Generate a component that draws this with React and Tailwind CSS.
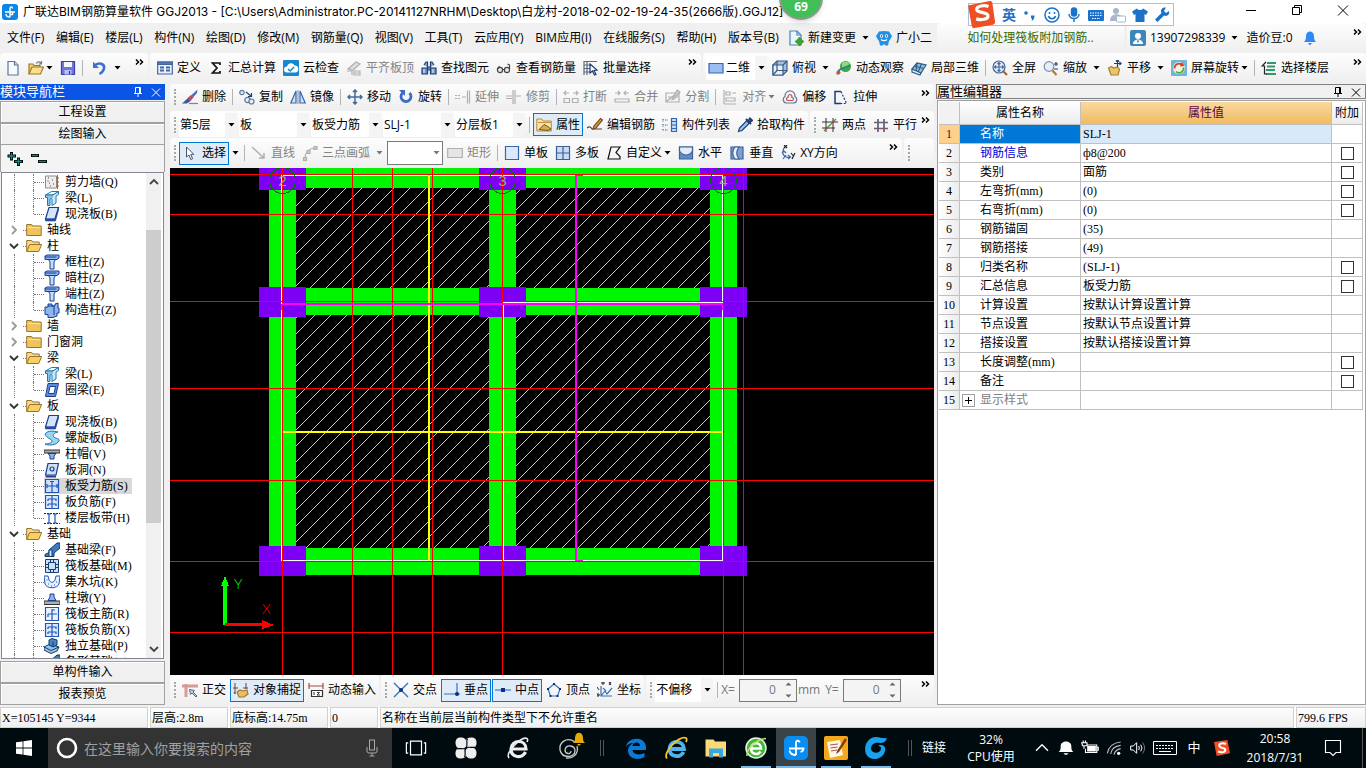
import React from "react";

const SONG = "font-[family-name:'Liberation_Serif','Noto_Sans_CJK_SC',serif]";
const UI = "font-[family-name:'Open_Sans','Noto_Sans_CJK_SC',sans-serif]";

/* ---------- icons ---------- */

const B = "#3566b0";
const N = "#1f3f73";
const G = "#b0b0b0";

const S = (props) => (
  <svg viewBox="0 0 16 16" className="size-4 shrink-0" fill="none" stroke={B} strokeWidth="1.2" aria-hidden="true" {...props} />
);

const icons = {
  newDoc: <S stroke="#5c7699"><path d="M3 1.5h6.5l3.500 3.500v10H3z" fill="#f7faff" /><path d="M9.500 1.500v3.500h3.500" fill="#cfdcf0" /></S>,
  open: <S stroke="#9a7a28"><path d="M1 14V4h4l1 1.500h6V8" fill="#f3d27a" /><path d="M1 14l3-7h11.500l-3 7z" fill="#fbe08c" /><path d="M8 3.500c2-2.500 4-2 5 0M13.500 1v3h-3" stroke="#6a7d98" /></S>,
  save: <S stroke="#3b3fa8"><path d="M1.500 1.500h13v13h-13z" fill="#6f78d8" /><path d="M4 2h8v5H4z" fill="#f4f6ff" stroke="none" /><path d="M4.500 10h7v4.500h-7z" fill="#b9c2ee" stroke="none" /><path d="M9.500 11v3" stroke="#2a2e80" /></S>,
  undo: <S stroke="#3f6fce" strokeWidth="2.600"><path d="M3 5c5-3 10-1 9 3.500-.4 2-2 4-4.500 5.500" /><path d="M1 1.500v6.500h6z" fill="#3f6fce" stroke="none" /></S>,
  define: <S stroke="#41679f"><path d="M.7 2h14.600v12H.7z" fill="#eaf1fb" /><path d="M.7 2h14.600v2.500H.7z" fill="#4c7ac0" /><path d="M3 7.500h4M3 10.500h4M9 7.500h4M9 10.500h4" strokeWidth="1.800" /></S>,
  sigma: <S stroke="#111" strokeWidth="1.700"><path d="M12 5V3H4.500L9 8l-4.500 5H12v-2" /></S>,
  cloud: <S stroke="none"><rect width="16" height="16" rx="1" fill="#1487cf" /><path d="M4 12.500a3 3 0 010-6 4 4 0 017.500-1 3.500 3.500 0 01.500 7z" fill="#fff" /><path d="M5 9l2.200 2L11 7" stroke="#1487cf" strokeWidth="1.500" /></S>,
  flat: <S stroke={G}><path d="M2 9l8-7 4 2-7 6z" fill="#ddd" /><path d="M1 11h5v4M8 11h6v4H8zM8 13h6" /></S>,
  binocular: <S stroke={N}><path d="M3 5l2-3h1.500v5M13 5l-2-3H9.500v5" fill="#8aa6d0" /><path d="M1 8h5.500v6H1zM9.500 8H15v6H9.500zM6.500 7h3v3h-3z" fill="#6f92c4" /><path d="M3 9v4M12 9v4" stroke="#dfeafa" /></S>,
  glasses: <S stroke="#444"><circle cx="4" cy="10" r="2.600" fill="#dfe8f0" /><circle cx="11" cy="10" r="2.600" fill="#dfe8f0" /><path d="M6.500 9.500h2M13.500 9V5l-2-1M1.500 9l2-3" /></S>,
  batch: <S stroke="#5a6a80"><path d="M1 1.500h13M1 5h6M1 8.500h6M1 12h6M4 1v14M1 1v14" /><path d="M7 4l7 6-3 .4 2 4-1.500.6-2-4L7 13z" fill="#f6f9ff" stroke={N} /></S>,
  rect2d: <S stroke={B}><path d="M1 3.500h14v9.500H1z" fill="#9dbdf0" /></S>,
  cube: <S stroke="#3b5b82"><path d="M1 5l4-4h10v10l-4 4H1z" fill="#a5c2e6" /><path d="M1 5h10v10H1z" fill="#e8f1fb" /><path d="M11 5l4-4M5 1v9.500M5 10.500L1 15M5 10.500h10" /></S>,
  orbit: <S stroke="none"><circle cx="9.500" cy="6.500" r="5.500" fill="#3aa84a" /><path d="M6 3c3-2.500 7-1 8 1-2 3-4 4-8 4z" fill="#8fdc7c" /><path d="M1.500 14.500C1 9 6 9 14 5" stroke="#2f7a8c" strokeWidth="1.800" /><circle cx="2.500" cy="12.500" r="2" fill="#d0503c" /></S>,
  local3d: <S stroke="#2c5c88"><path d="M1 9l5-6 9 2-5 8z" fill="#93bedd" /><path d="M1 9v3l8 3 1-2M6 3l-1 8M10.500 4L7 12M3.500 6l9 2.500" /></S>,
  full: <S stroke="#47659a"><circle cx="7" cy="7" r="6" fill="#e4eefb" /><path d="M7 2.500v9M2.500 7h9M5.500 4L7 2.500 8.500 4M5.500 10L7 11.500 8.500 10M4 5.500L2.500 7 4 8.500M10 5.500L11.500 7 10 8.500" /><path d="M11.500 11.500l3.500 3.500" stroke="#a5672c" strokeWidth="2.200" /></S>,
  zoom: <S stroke="#7c90ab"><circle cx="6" cy="6.500" r="4.800" fill="#e4eefb" /><path d="M9.500 10.500l4 4.500" stroke="#b5792c" strokeWidth="2.200" /><path d="M11 4h4M13 2v4M11 9h4" stroke={N} /></S>,
  pan: <S stroke="#a8802f"><path d="M1.500 8l3-1.500 2 1.500 4-1 2 2.500-1.500 5.500H4z" fill="#eac56a" /><path d="M10.500 0v7M7 3.500h7M9 1.500L10.500 0 12 1.500M12.500 2L14 3.500 12.500 5" stroke={N} /></S>,
  screenRot: <S stroke="none"><rect width="16" height="16" rx="1" fill="#6fb7d9" /><circle cx="8" cy="8" r="6" fill="#eef5dc" /><path d="M3.500 8.500a4.500 4.500 0 017-4" stroke="#d83a2c" strokeWidth="1.700" /><path d="M12.500 7.500a4.500 4.500 0 01-7.500 4" stroke="#55a83c" strokeWidth="1.700" /><path d="M11 2l2.500 4-4.500.5z" fill="#d83a2c" /></S>,
  floors: <S stroke="#2f9a6a" strokeWidth="1.800"><path d="M6 3h9M6 6.500h8M5 10h9M5 14h10" /><path d="M5 2L1 6h2.500v8H6" stroke="#222" strokeWidth="1.200" /></S>,
  brush: <S stroke="none"><path d="M15.500.5L9 6.500l2 2L15 4z" fill="#4a70b4" /><path d="M9 6l2.500 2.500-3 3.500-3-3z" fill="#c04a5e" /><path d="M6 9l2.500 3-3.500 2.500H0z" fill="#345ca4" /><path d="M7 14.500h9" stroke="#6a86b8" /></S>,
  copy: <S stroke="#5d7899"><circle cx="3" cy="3.500" r="2.200" fill="#e6eef7" /><circle cx="8.500" cy="11" r="2.700" fill="#e6eef7" /><circle cx="12.500" cy="12.500" r="2.500" fill="#e6eef7" /><path d="M7 3l5 4M12.500 4v3.500H9" stroke={N} /></S>,
  mirror: <S stroke={B}><path d="M6 2v12H.8zM10 2v12h5.200z" fill="#d4e2f5" /><path d="M8 1v14" stroke="#8a9ab0" /></S>,
  move: <S stroke="#466a9e" strokeWidth="1.500"><path d="M8 1v14M1 8h14M6 3l2-2 2 2M6 13l2 2 2-2M3 6L1 8l2 2M13 6l2 2-2 2" /></S>,
  rotate: <S stroke="#3c6cc4" strokeWidth="2.800"><path d="M4.500 4a5 5 0 107 0" /><path d="M1 1h6v6z" fill="#3c6cc4" stroke="none" /></S>,
  extend: <S stroke={G}><path d="M0 6.500h6M0 9.500h6" strokeDasharray="2 1" /><path d="M7 8h4M12.500 1.500v13M14.500 1.500v13" /></S>,
  trim: <S stroke={G}><path d="M0 7h6M0 9.500h6M7 1v14M9 1v14M10 7h5" /></S>,
  brk: <S stroke={G}><path d="M1 4h5M3 2L1 4l2 2M10 4h5M13 2l2 2-2 2M1 9.500h5.500v4H1zM9.500 9.500H15v4H9.500z" /></S>,
  merge: <S stroke={G}><path d="M1 4h5M4 2l2 2-2 2M10 4h5M12 2l-2 2 2 2M1 10h14v3H1z" /></S>,
  split: <S stroke={G}><path d="M1 4h13v9H1zM1 13L14 2M3 8h10" /><path d="M12 1l3 2-6 7-2 .5z" fill="#ccc" /></S>,
  align: <S stroke={G}><path d="M2 1v14M2 15h12M4 3h4v3H4zM4 9h9v3H4zM10 4h4" /></S>,
  offset: <S stroke="#5c7699"><path d="M4 14a3.500 3.500 0 01-1-6.500C3 0 13 0 13 7.500a3.500 3.500 0 01-1 6.500z" fill="#eef3f8" /><path d="M6 11.500a1.500 1.500 0 010-3c0-4 4-4 4 0a1.500 1.500 0 010 3z" stroke="#cc4a42" /></S>,
  stretch: <S stroke={N}><path d="M8 2.500H2v12h6" strokeWidth="1.500" /><path d="M8 2.500l5.500 12H8" strokeDasharray="2 1.500" /></S>,
  props: <S stroke="#b98a3a" strokeWidth="1"><path d="M.8 2h5l1.500 2h8v10H.8z" fill="#fbe2aa" /><path d="M2 5.500h13" stroke="#c98f38" /><path d="M3 12.500l5-5 3 1.500 4 3-3 1.500z" fill="#d9ac50" stroke="#6a5424" /></S>,
  editBar: <S stroke="#444"><path d="M0 11c2-2 4-1 5 1h10" /><path d="M13.500 1.500l2 1.500-6.500 8-3 1 1-3z" fill="#dfa254" stroke="#7a4a20" /></S>,
  list: <S stroke={B}><path d="M1 2v3M1 7v3M1 12v2M3 3h3M3 8h3M3 13h3" strokeDasharray="1.500 1" /><path d="M9.500 1.500h5v13h-5zM9.500 4.500h5M9.500 8h5M9.500 11.500h5" fill="#cadcf2" /></S>,
  picker: <S stroke={N}><path d="M10 3.500L2.500 11l-1 3.500 3.500-1L12.500 6z" fill="#9cc4ee" /><path d="M9 2l5 5M11 4.500l2-3 2 2-3 2z" strokeWidth="2" /></S>,
  twoPt: <S stroke="#333"><path d="M4 1v14M11 1v14M0 5h16M0 11h13" strokeWidth="1" /><path d="M2 14L14 2" stroke="#3f9a3f" /><circle cx="4.500" cy="11" r="1.300" fill="#c33" stroke="none" /><circle cx="11" cy="5" r="1.300" fill="#c33" stroke="none" /></S>,
  parallel: <S stroke="#3a5078"><path d="M5 2v13M11 2v13" strokeWidth="1.500" /><path d="M1 5.500h14M1 11.500h14" stroke="#7a5a6c" strokeWidth="1.500" /></S>,
  cursor: <S stroke="#44556b" strokeWidth="1"><path d="M4.500 2v10l2.500-2 1.800 4.500 1.800-.8L8.800 9.500l3-.2z" fill="#fff" /></S>,
  line: <S stroke={G}><path d="M1 2l12 11M13 8v5H8" strokeWidth="1.500" /></S>,
  arc: <S stroke={G}><path d="M3 14C3 7 7 3 14 3" /><path d="M1.500 12.500h3v3h-3zM5 5.500h3v3H5zM12 1.500h3v3h-3z" fill="#ccc" /></S>,
  rectG: <S stroke={G}><path d="M.7 3.500h14.600v9H.7z" fill="#e6e6e6" /></S>,
  single: <S stroke={B}><path d="M1.500 1.500h13v13h-13z" fill="#dce9fb" /></S>,
  multi: <S stroke="#3e5f94"><path d="M1.500 1.500h13v13h-13zM8 1.500v13M1.500 8h13" fill="#c9dcf5" /></S>,
  custom: <S stroke="#111"><path d="M5 2h9l-4 5.500 4 4V14H2z" /></S>,
  horiz: <S stroke="#3e5f94"><path d="M1.500 2h13v12h-13z" fill="#5f8cc8" /><path d="M1.500 2v4c2 3 4 4 6.500 4s4.500-1 6.500-4V2z" fill="#e0ecfa" /></S>,
  vert: <S stroke="#3e5f94"><path d="M2 2h12v12H2z" fill="#7aa0d4" /><path d="M6 2h4c-3 4-3 8 0 12H6c-3-4-3-8 0-12z" fill="#eef4fc" /></S>,
  xy: <S stroke={B}><path d="M4 3c-4 8 3 10 6 9M2 8l2-2 2 2M8 10l2.500 2-2.500 2M3 14l3-4" /><path d="M4 0l3 3M7 0L4 3M11 8l2 2.500M15 8l-3 6" stroke="#222" /></S>,
  ortho: <S stroke="#d99a98" strokeWidth="3"><path d="M4 2v13M0 4h16" /><path d="M7.500 7.500l1 5 1.500-1.500 4 4 1-1-4-4 1.500-1.500z" stroke="#5a6b82" fill="#c8d2de" strokeWidth="1" /></S>,
  snap: <S stroke="#7a3b3b"><path d="M2 1v11M13 1v6M0 6h5M2 12l-1-2M10 6h5" strokeWidth="1" /><path d="M4 10l3-2 3 1 4-1 1 4-4 3H6z" fill="#e7be62" stroke="#a07a30" /></S>,
  dyn: <S stroke="#9b4a4a"><path d="M1 1v6M15 1v6M1 4h14" /><path d="M3.500 8.500h11v6h-11z" fill="#fff" stroke="#333" /><path d="M6 10v3M9 10.500h2.500L9 13h3" stroke="#333" strokeWidth="1" /></S>,
  cross: <S stroke="#3572bd" strokeWidth="1.400"><path d="M1 1l14 14M15 1L1 15" /><circle cx="8" cy="8" r="2" fill="#0b2f82" stroke="none" /></S>,
  perp: <S stroke="#3572bd"><path d="M0 12h16M13 1v11" /><circle cx="13" cy="12" r="2" fill="#0b2f82" stroke="none" /></S>,
  mid: <S stroke="#6fa0dc" strokeWidth="1.800"><path d="M0 8h16" /><path d="M6 6h4v4H6z" fill="#0b2f82" stroke="none" /></S>,
  vertex: <S stroke="#3572bd"><path d="M8 2l6 5-2.500 7h-7L2 7z" /><path d="M7 1h2v2H7zM1 6h2v2H1zM13 6h2v2h-2zM3.500 13h2v2h-2zM10.500 13h2v2h-2z" fill="#0b2f82" stroke="none" /></S>,
  coord: <S stroke="#3572bd"><path d="M4 4v10h11M4 14l4-5 2 3 5-6M6 6l3 3" /><path d="M5 0h2v2H5zM12 0l2 3M14 0l-2 3M0 12h2v2H0zM0 5l2 3" stroke="#222" strokeWidth="1" /></S>,
  change: <S stroke="#4b83b2"><path d="M2 1h7l4 4v10H2z" fill="#eaf4fc" /><path d="M9 1v4h4" /><path d="M11.500 7l2 2.500L16 11.500l-2.500 2-2 2.500-2-2.500-2.500-2 2.500-2z" fill="#3ca52c" stroke="#2c7a20" strokeWidth=".6" /></S>,
  robot: <S stroke="none"><path d="M3 1.500L8 1l5 .5L16 6l-1.500 3L13 11l-1 4.500H9.500L8 14l-1.500 1.500H4L3 11 1.500 9 0 6z" fill="#1f8fe8" /><circle cx="5.500" cy="6" r="1.700" fill="#fff" /><circle cx="10.500" cy="6" r="1.700" fill="#fff" /><circle cx="5.500" cy="6" r=".8" fill="#124" /><circle cx="10.500" cy="6" r=".8" fill="#124" /><path d="M5 9.500c1.500 1.500 4.500 1.500 6 0" stroke="#fff" /></S>,
  user: <S stroke="none"><rect width="16" height="16" rx="2" fill="#3d86b8" /><circle cx="8" cy="6" r="3" fill="#fff" /><path d="M3 14c0-6 10-6 10 0z" fill="#fff" /><path d="M6.500 10.500L8 13l1.500-2.500z" fill="#3d86b8" /></S>,
  bell: <S stroke="none"><path d="M2 12c2-2 2-4 2-6 0-6 8-6 8 0 0 2 0 4 2 6zM6 13h4l-2 2.500z" fill="#2f8af5" /></S>,
};

const treeIcons = {
  folder: <S stroke="#9a742a" strokeWidth="1"><path d="M.7 13.500v-11h5l1 1.500h8.500v9.500z" fill="#efc45c" /><path d="M1.500 5.500h13" stroke="#fbe6a6" /></S>,
  folderOpen: <S stroke="#9a742a" strokeWidth="1"><path d="M.7 13.500v-11h5l1 1.500h6.500v3" fill="#f6dc92" /><path d="M.7 13.500l3-7h12l-3 7z" fill="#f7cf66" /></S>,
  wall: <S stroke="#8c8c8c" strokeWidth="1"><path d="M1.500 2h11v12h-11z" fill="#eee" /><path d="M4 4h1M8 6h1M5 9h1M9 10h1M6 12h1M3.500 7h1" stroke="#444" /><path d="M13.500 1v14M12 4h3M12 8h3M12 12h3" stroke="#b5642a" /></S>,
  beam: <S stroke="#1d7ab5" strokeWidth="1"><path d="M1.500 5l6-3.500h7L9 5z" fill="#fff" /><path d="M1.500 5H9v2.500L6 9v6.500H3.500V7.500h-2z" fill="#8cc6ea" /><path d="M9 5l5.500-3.500v3L12 6v7l-4 2.500V9" fill="#cfe8f8" /></S>,
  slab: <S stroke="#1d3f8f"><path d="M5 1.500h9.500L11 13H1.500z" fill="#d4e4fc" /><path d="M1.500 13h9.500l3.500-11.500v2.500L11.500 15h-10z" fill="#2452b4" strokeWidth=".6" /></S>,
  column: <S stroke="#123f94" strokeWidth="1"><path d="M1 2l2-1h12v3l-2 1.500H1z" fill="#8fb4ee" /><path d="M4.500 5.500h7L10 8v7H6V8z" fill="#c9dcfa" /><path d="M1 3h11.500" /></S>,
  conCol: <S stroke="#123f94" strokeWidth="1"><path d="M4 2h4v2h3V2l3-1v5h1v5h-2v3l-4 1.500H4v-3H1V5h3z" fill="#8fb4ee" /><path d="M4 4h6v9" /></S>,
  ring: <S stroke="#1d3f8f" strokeWidth="1"><path d="M4 1.500h10.500L11.500 14.500H1.500z" fill="#5d8ce0" /><path d="M6 4.500h5.500l-1.500 7H4.500z" fill="#fff" /></S>,
  spiral: <S stroke="#1b6fae" strokeWidth="1"><path d="M1 4c3-4 9-3 13-2-4 1-6 3-4 5s6 1 5 4c-2 4-10 5-14 3 3 0 7-1 7-3S2 8 1 4z" fill="#9ad4f3" /></S>,
  cap: <S stroke="#333" strokeWidth="1"><path d="M0 4h16v3H0z" fill="#aaa" /><path d="M4 7.500h8l-2 2.500v3H6v-3z" fill="#8fb4ee" stroke="#123f94" /></S>,
  hole: <S stroke="#1d3f8f"><path d="M4 1.500h10.500L12 13H1.500z" fill="#cfe0fb" /><path d="M1.500 14.500H12" strokeWidth="2" /><circle cx="8" cy="7" r="2" /></S>,
  rebar: <S stroke="#1f56b8"><path d="M1.500 1.500h13v13h-13z" fill="#cfe0fb" /><path d="M8 3v11M3 8h11M3 6v4M13 6v4M6 3.500h4" /></S>,
  negBar: <S stroke="#1f56b8"><path d="M1.500 1.500h13v13h-13z" fill="#dbe8fc" /><path d="M8 2v12M4 5h8v2M4 5v2M4 10h8v2M4 10v2" /></S>,
  strip: <S stroke="#1f56b8"><path d="M0 3.500h16M0 13.500h16" strokeDasharray="2 1" stroke="#222" /><path d="M5 4v9M11 4v9M3 4h4M9 4h4M3 13h4M9 13h4" /></S>,
  fBeam: <S stroke="#0f3a6e" strokeWidth="1"><path d="M1 14.500v-2l4-2V8l8-7h3v5l-6 5v3.500z" fill="#3d7bc0" /><path d="M5 8l3 0v6.500H5z" fill="#d4e6f8" /></S>,
  raft: <S stroke="#123f74" strokeWidth="1"><path d="M1.500 1.500h13v13h-13z" fill="#cfe0f5" /><path d="M4.500 4.500h7v7h-7zM6.500 1.500v3M9.500 1.500v3M6.500 11.500v3M9.500 11.500v3M1.500 6.500h3M1.500 9.500h3M11.500 6.500h3M11.500 9.500h3" /></S>,
  pit: <S stroke="#1f56b8" strokeWidth="1"><path d="M0 2h4l1 4c1 3 5 3 6 0l1-4h4l-1 8c-2 5-12 5-14 0z" fill="#e6f0ff" /><path d="M4 10h1M7 12h1M10 11h1M2.500 6h1M12 8h1" /></S>,
  pier: <S stroke="#333" strokeWidth="1"><path d="M0 11h16v3.500H0z" fill="#b0b0b0" /><path d="M6 4h4v3l2 3.500H4L6 7z" fill="#8fb4ee" stroke="#123f94" /></S>,
  mainBar: <S stroke="#1f56b8"><path d="M1.500 1.500h13v13h-13z" fill="#eaf2ff" /><path d="M8 3v11M4 8h9M4 8v3M8 4h3" /></S>,
  indep: <S stroke="#0f3a6e" strokeWidth="1"><path d="M0 9l6-3 9 3-2 4-6 2.500L0 12z" fill="#9cc3e6" /><path d="M5 2l3-1.500 5 1.500v5L9 9 5 7z" fill="#4a84c0" /><path d="M9 3.500V9M0 9l7 3.500L15 9" /></S>,
};

/* ---------- toolbar parts ---------- */

const Caret = ({ muted }) => (
  <svg viewBox="0 0 7 4" className="h-1 w-[7px] shrink-0" aria-hidden="true">
    <path d="M.5 0h6L3.500 3.500z" fill={muted ? "#777" : "#000"} />
  </svg>
);

const More = () => (
  <button type="button" aria-label="更多" className="ml-auto mr-1 mt-1.5 shrink-0 self-start">
    <svg viewBox="0 0 9 6" className="h-1.5 w-[9px]" fill="none" stroke="#000" strokeWidth="1.500" aria-hidden="true">
      <path d="M1 .5L3.500 3 1 5.500M5 .5L7.500 3 5 5.500" />
    </svg>
  </button>
);

const Grip = () => <span className="ml-1 mr-px h-4 w-[3px] shrink-0 border-l-2 border-dotted border-[#a8a8a8]" />;
const Sep = () => <span className="mx-0.5 h-4 w-px shrink-0 bg-[#b4b4b4]" />;

function Item({ icon, label, disabled, active, caret, tight }) {
  return (
    <button
      type="button"
      disabled={disabled}
      className={
        "flex h-[23px] shrink-0 items-center whitespace-nowrap border px-0.5 " +
        (active ? "border-[#0078d7] bg-[#dfecf7] " : "border-transparent ") +
        (disabled ? "text-[#838383]" : "text-black")
      }
    >
      {icon && <span className={label ? "mr-1 flex" : "flex"}>{icons[icon]}</span>}
      {label}
      {caret && <span className={tight ? "ml-0.5 flex" : "ml-1.5 flex"}><Caret muted={disabled} /></span>}
    </button>
  );
}

function Combo({ value, label, width, icon, bordered }) {
  return (
    <div className={"relative flex h-6 shrink-0 items-center bg-white " + width + (bordered ? " border border-[#7a7a7a]" : " mr-px")}>
      {icon && <span className="ml-0.5 mr-px flex">{icons[icon]}</span>}
      <select aria-label={label} defaultValue={value} className="h-full min-w-0 flex-1 appearance-none bg-transparent pl-px outline-none">
        <option value={value}>{value}</option>
      </select>
      <span className={"pointer-events-none absolute inset-y-0 right-0 flex w-3 items-center justify-center " + (bordered ? "" : "bg-[#f4f4f4]")}>
        <Caret muted={bordered} />
      </span>
    </div>
  );
}

const Group = ({ className = "", children }) => (
  <div className={"flex items-center gap-px rounded-sm bg-gradient-to-b from-[#fdfdfd] to-[#efefef] " + className}>{children}</div>
);

const render = (items) => items.map((it, i) => (it === "|" ? <Sep key={i} /> : <Item key={i} {...it} />));

/* ---------- header ---------- */

function TitleBar() {
  return (
    <header className="flex h-[23px] items-center bg-white pl-0.5">
      <svg viewBox="0 0 16 16" className="size-4" aria-hidden="true">
        <rect width="16" height="16" rx="3" fill="#0a86e8" />
        <path d="M8 13V4.500c0-2 2.500-2 2.500 0M3 8h10M8 13c-3 0-4-1.500-4-3M10.500 8v2.500H8" fill="none" stroke="#fff" strokeWidth="1.400" />
      </svg>
      <h1 className="ml-[5px] whitespace-nowrap font-[family-name:'Inter','Noto_Sans_CJK_SC',sans-serif] text-[12px]">
        广联达BIM钢筋算量软件 GGJ2013 - [C:\Users\Administrator.PC-20141127NRHM\Desktop\白龙村-2018-02-02-19-24-35(2666版).GGJ12]
      </h1>
      <div className="mb-1 ml-auto flex">
        {[
          ["最小化", "M1 6.500h10"],
          ["还原", "M1.500 3.500h7v7h-7zM3.500 3.500v-2h7v7h-2"],
          ["关闭", "M1 1.500l10 10M11 1.500l-10 10"],
        ].map(([name, d]) => (
          <button key={name} type="button" aria-label={name} className="flex w-[46px] justify-center">
            <svg viewBox="0 0 12 12" className="size-3" fill="none" stroke="#000" aria-hidden="true"><path d={d} /></svg>
          </button>
        ))}
      </div>
    </header>
  );
}

function Overlays() {
  return (
    <>
      <div className="absolute -top-6 left-[779px] flex size-[44px] items-end justify-center rounded-full border-2 border-[#8e9a90] bg-[#3fbf55] pb-[3px] text-[12px] font-bold leading-4 text-white shadow-md">69</div>
      <div className="absolute right-[192px] top-[3px] flex h-[23px] w-[206px] items-center border border-[#a9c0de] bg-white pl-[33px]">
        <svg viewBox="0 0 26 26" className="absolute -left-0.5 -top-1 size-7" aria-hidden="true">
          <path d="M1 5L21 1q2-.4 2.500 1.500L26 20q.3 2.500-2 3L7 26q-2 .3-2.500-1.500z" fill="#f04e23" />
          <path d="M20 6c-4-1.500-11-.5-11 2.800 0 3.400 10.500 2 10.500 6 0 3.200-6.500 4.200-11 2.700" fill="none" stroke="#fff" strokeWidth="3" />
        </svg>
        <div className="flex items-center gap-1.5 text-[14px] font-bold leading-4 text-[#1b72c8]">
          <span>英</span>
          <svg viewBox="0 0 16 16" className="size-4" aria-hidden="true"><circle cx="4" cy="6" r="1.800" fill="#1b72c8" /><path d="M9 8.500h3.500c0 3-1 4.500-3 5.500.8-1.500.8-2.500-.5-3z" fill="#1b72c8" /></svg>
          <svg viewBox="0 0 16 16" className="size-4" fill="none" stroke="#1b72c8" strokeWidth="1.500" aria-hidden="true"><circle cx="8" cy="8" r="7" /><path d="M4.500 9c1 3.500 6 3.500 7 0M5.500 5v2M10.500 5v2" /></svg>
          <svg viewBox="0 0 16 16" className="size-4" fill="none" stroke="#1b72c8" strokeWidth="1.500" aria-hidden="true"><rect x="5.500" y="1" width="5" height="8" rx="2.500" fill="#1b72c8" /><path d="M3 7c0 6 10 6 10 0M8 12v3" /></svg>
          <svg viewBox="0 0 16 16" className="size-4" aria-hidden="true"><rect y="3" width="16" height="11" rx="1" fill="#1b72c8" /><path d="M2 6h12M2 8.500h12M4 11.500h8" stroke="#fff" strokeDasharray="1.500 1" strokeWidth="1.200" /></svg>
          <svg viewBox="0 0 16 16" className="size-4" aria-hidden="true"><circle cx="6" cy="4" r="3" fill="#a9b6cb" /><path d="M0 14c0-8 10-8 12-4v4z" fill="#a9b6cb" /><rect x="6.500" y="9" width="9" height="6" rx="1" fill="#fff" stroke="#a9b6cb" /></svg>
          <svg viewBox="0 0 16 16" className="size-4" aria-hidden="true"><path d="M5 1.500c1 2 5 2 6 0l5 3-2 3.500-1.500-1V15h-9V7L2 8 0 4.500z" fill="#1b72c8" /></svg>
          <svg viewBox="0 0 16 16" className="size-4" aria-hidden="true"><path d="M15 4l-3 2-2-2 2-3.500C8 0 6 3 7.500 6L1 12.500 3.500 15 10 8.500c3 1.500 6-1 5-4.500z" fill="#1b72c8" /></svg>
        </div>
      </div>
    </>
  );
}

const menus = ["文件(F)", "编辑(E)", "楼层(L)", "构件(N)", "绘图(D)", "修改(M)", "钢筋量(Q)", "视图(V)", "工具(T)", "云应用(Y)", "BIM应用(I)", "在线服务(S)", "帮助(H)", "版本号(B)"];

function MenuBar() {
  return (
    <nav className="flex h-[30px] items-center text-[12px]">
      <div className="flex w-[785px] shrink-0 justify-between pl-[7px] pr-1.5">
        {menus.map((m) => <button key={m} type="button" className="whitespace-nowrap">{m}</button>)}
      </div>
      <div className="flex flex-1 gap-px">
        <Item icon="change" label="新建变更" caret />
        <Item icon="robot" label="广小二" />
      </div>
      <div className="flex w-[429px] shrink-0 gap-[3px] self-stretch">
        <Group className="w-[187px] justify-center"><a href="#help" className="whitespace-nowrap text-[#356a00]">如何处理筏板附加钢筋..</a></Group>
        <Group className="flex-1">
          <Item icon="user" label="13907298339" caret />
          <span className="ml-1">造价豆:0</span>
          <span className="ml-2 flex">{icons.bell}</span>
          <More />
        </Group>
      </div>
    </nav>
  );
}

function MainToolbar() {
  return (
    <div className="flex h-[31px] gap-0.5 pb-0.5">
      <Group className="w-[148px] shrink-0 pl-0.5">
        <Item icon="newDoc" />
        <Item icon="open" caret tight />
        <Item icon="save" />
        <Sep />
        <span className="ml-[3px] flex"><Item icon="undo" caret /></span>
        <More />
      </Group>
      <Group className="w-[551px] shrink-0 pl-1">
        {render([
          { icon: "define", label: "定义" },
          { icon: "sigma", label: "汇总计算" },
          { icon: "cloud", label: "云检查" },
          { icon: "flat", label: "平齐板顶", disabled: true },
          { icon: "binocular", label: "查找图元" },
          { icon: "glasses", label: "查看钢筋量" },
          { icon: "batch", label: "批量选择" },
        ])}
        <More />
      </Group>
      <Group className="min-w-0 flex-1 pl-[3px]">
        <Combo icon="rect2d" value="二维" label="视图模式" width="w-[61px]" />
        {render([
          { icon: "cube", label: "俯视", caret: true },
          { icon: "orbit", label: "动态观察" },
          { icon: "local3d", label: "局部三维" },
          "|",
          { icon: "full", label: "全屏" },
          { icon: "zoom", label: "缩放", caret: true },
          { icon: "pan", label: "平移", caret: true },
          { icon: "screenRot", label: "屏幕旋转", caret: true, tight: true },
          "|",
          { icon: "floors", label: "选择楼层" },
        ])}
        <More />
      </Group>
    </div>
  );
}

/* ---------- left panel ---------- */

const tree = [
  ["c", "wall", "剪力墙(Q)"], ["c", "beam", "梁(L)"], ["l", "slab", "现浇板(B)"],
  ["+", "folder", "轴线"],
  ["-", "folderOpen", "柱"], ["c", "column", "框柱(Z)"], ["c", "column", "暗柱(Z)"], ["c", "column", "端柱(Z)"], ["l", "conCol", "构造柱(Z)"],
  ["+", "folder", "墙"], ["+", "folder", "门窗洞"],
  ["-", "folderOpen", "梁"], ["c", "beam", "梁(L)"], ["l", "ring", "圈梁(E)"],
  ["-", "folderOpen", "板"], ["c", "slab", "现浇板(B)"], ["c", "spiral", "螺旋板(B)"], ["c", "cap", "柱帽(V)"], ["c", "hole", "板洞(N)"],
  ["c", "rebar", "板受力筋(S)", true], ["c", "negBar", "板负筋(F)"], ["l", "strip", "楼层板带(H)"],
  ["-", "folderOpen", "基础"], ["c", "fBeam", "基础梁(F)"], ["c", "raft", "筏板基础(M)"], ["c", "pit", "集水坑(K)"], ["c", "pier", "柱墩(Y)"],
  ["c", "mainBar", "筏板主筋(R)"], ["c", "negBar", "筏板负筋(X)"], ["c", "indep", "独立基础(P)"], ["c", "fBeam", "条形基础(T)"],
];

const Chevron = ({ d, color = "#444" }) => (
  <svg viewBox="0 0 10 10" className="size-2.5 shrink-0" fill="none" stroke={color} strokeWidth="1.800" aria-hidden="true"><path d={d} /></svg>
);
const DOWN = "M1 3l4 4 4-4";
const UP = "M1 7l4-4 4 4";
const RIGHT = "M3 1l4 4-4 4";

function TreeRow({ row }) {
  const [kind, icon, label, selected] = row;
  if (kind === "+" || kind === "-") {
    return (
      <li className="flex h-4 items-center pl-[7px]">
        <Chevron d={kind === "+" ? RIGHT : DOWN} color={kind === "+" ? "#9a9a9a" : "#333"} />
        <span className="ml-1 w-[3px] border-t border-dotted border-[#777]" />
        <span className="mr-[5px] flex">{treeIcons[icon]}</span>
        {label}
      </li>
    );
  }
  return (
    <li className="flex h-4 items-center pl-3">
      <span className="w-[19px] shrink-0 self-stretch border-l border-dotted border-[#777]" />
      <span className={"shrink-0 border-l border-dotted border-[#777] " + (kind === "l" ? "h-2 self-start" : "self-stretch")} />
      <span className="w-2.5 shrink-0 border-t border-dotted border-[#777]" />
      <span className={"flex h-4 items-center whitespace-nowrap pr-1 " + (selected ? "bg-[#d9d9d9]" : "")}>
        <span className="mr-[5px] flex">{treeIcons[icon]}</span>
        {label}
      </span>
    </li>
  );
}

const Section = ({ children }) => (
  <button type="button" className="h-[22px] w-full shrink-0 border border-[#a0a0a0] bg-[#f0f0f0] text-center leading-5 shadow-[inset_1px_1px_0_#fff]">{children}</button>
);

function PinClose({ color }) {
  return (
    <span className="ml-auto flex gap-2">
      <button type="button" aria-label="固定"><svg viewBox="0 0 10 10" className="size-2.5" fill="none" stroke={color} aria-hidden="true"><path d="M2.500 6V.5h5V6M1 6.500h8M5 6.500V10M6.500 1v5" /></svg></button>
      <button type="button" aria-label="关闭面板"><svg viewBox="0 0 10 10" className="size-2.5" fill="none" stroke={color} aria-hidden="true"><path d="M1 1.500l8 8M9 1.500l-8 8" /></svg></button>
    </span>
  );
}

function ModulePanel() {
  return (
    <aside className={"flex w-[165px] shrink-0 flex-col pb-0.5 text-[12px] " + SONG}>
      <div className="flex h-4 shrink-0 items-center bg-[#0a55e6] pr-1 text-[13px] leading-4 text-white">
        模块导航栏<PinClose color="#fff" />
      </div>
      <div className="mt-px shrink-0"><Section>工程设置</Section><Section>绘图输入</Section></div>
      <div className="flex h-[27px] shrink-0 items-center gap-2 border-x border-[#a0a0a0] bg-[#f4f4f4] pl-1.5">
        <button type="button" aria-label="展开全部">
          <svg viewBox="0 0 16 14" className="h-3.5 w-4" fill="none" aria-hidden="true"><path d="M4.500 0v8.500M.5 4h8.500M11.500 5.500V14M7 9.500h9" stroke="#000" strokeWidth="3" /><path d="M4.500 1v6.500M1.500 4h6.500M11.500 6.500V13M8 9.500h7" stroke="#0c8a80" strokeWidth="1.400" /></svg>
        </button>
        <button type="button" aria-label="折叠全部">
          <svg viewBox="0 0 16 14" className="h-3.5 w-4" fill="none" aria-hidden="true"><path d="M0 3.500h8M7 9.500h9" stroke="#000" strokeWidth="3" /><path d="M1 3.500h6M8 9.500h7" stroke="#0c8a80" strokeWidth="1.400" /></svg>
        </button>
      </div>
      <div className="mx-px flex min-h-0 flex-1 border border-[#828790] bg-white pr-0.5">
        <ul className="min-h-0 flex-1 overflow-hidden pt-px leading-4">{tree.map((r, i) => <TreeRow key={i} row={r} />)}</ul>
        <div className="flex w-[15px] shrink-0 flex-col items-center bg-[#f0f0f0]">
          <span className="flex h-[57px] pt-1"><Chevron d={UP} /></span>
          <span className="h-[293px] w-full bg-[#cdcdcd]" />
          <span className="mb-1 mt-auto"><Chevron d={DOWN} /></span>
        </div>
      </div>
      <div className="mt-0.5 shrink-0"><Section>单构件输入</Section><Section>报表预览</Section></div>
    </aside>
  );
}

/* ---------- drawing ---------- */

const hatch = Array.from({ length: 72 }, (_, i) => 3 + i * 16).filter((k) => k > 130).map((k) => `M${k + 0.5} .5l-420 420`).join("");
const GREEN = "#00f500";
const VIOLET = "#7d00f5";

function Drawing() {
  const R = (x, y, w, h, fill, key) => <rect key={key} x={x} y={y} width={w} height={h} fill={fill} />;
  return (
    <svg className="block min-h-0 w-full flex-1 bg-black" shapeRendering="crispEdges" role="img" aria-label="板受力筋平面图">
      <defs>
        <clipPath id="bays">
          <path d="M126 20h193v100H126zM346 20h194v100H346zM126 147h193v233H126zM346 147h194v233H346z" />
        </clipPath>
      </defs>
      <path d={hatch} stroke="#c4c4c4" strokeWidth="1" clipPath="url(#bays)" />
      {[99, 319, 540].map((x) => R(x, 0, 27, 400, GREEN, x))}
      {R(89, 0, 488, 20, GREEN)}
      {R(89, 120, 488, 27, GREEN)}
      {R(89, 380, 488, 27, GREEN)}
      {[89, 309, 530].map((x) => [R(x, 0, 47, 22, VIOLET, "a" + x), R(x, 119, 47, 30, VIOLET, "b" + x), R(x, 378, 47, 30, VIOLET, "c" + x)])}
      {R(111, 7, 1, 386, "#fff")}
      {R(112, 7, 441, 1, "#fff")}
      {R(552, 7, 1, 386, "#fff")}
      {R(112, 392, 441, 1, "#fff")}
      {R(332, 134, 221, 1, "#fff")}
      {R(333, 137, 1, 256, "#fff")}
      {[112, 182, 222, 262, 332, 553, 573].map((x) => R(x, 0, 1, "100%", "#f00", "v" + x))}
      {[6, 46, 133, 220, 312, 393, 464].map((y) => R(0, y, "100%", 1, "#f00", "h" + y))}
      {R(258, 7, 2, 386, "#ff0")}
      {R(113, 263, 440, 2, "#ff0")}
      {R(405, 7, 2, 386, "#f0f")}
      {R(405, 7, 8, 1, "#f0f")}
      {R(405, 392, 8, 1, "#f0f")}
      {R(112, 135, 441, 2, "#f0f")}
      {R(111, 136, 1, 6, "#f0f")}
      {R(552, 136, 1, 6, "#f0f")}
      {[["2", 112], ["3", 332], ["4", 553]].map(([t, x]) => (
        <g key={t}>
          <circle cx={x + 0.5} cy="12.500" r="13" fill="none" stroke="#0a6a10" />
          <text x={x + 0.5} y="18" textAnchor="middle" fontSize="15" fill="#9aa878" className="font-[family-name:'Liberation_Sans',sans-serif]">{t}</text>
        </g>
      ))}
      <path d="M53 457V418h-2l4-10 4 10h-2v39z" fill="#0f0" />
      <path d="M55 455h37v-3l12 5-12 4v-3H55z" fill="#f00" />
      <text x="64" y="421" fontSize="14" fill="#0f0" className="font-[family-name:'Lato',sans-serif] font-light">Y</text>
      <text x="92" y="446" fontSize="14" fill="#f00" className="font-[family-name:'Lato',sans-serif] font-light">X</text>
    </svg>
  );
}

function Spin({ label }) {
  return (
    <label className="flex items-center text-[#777]">
      <span className="mr-1">{label}</span>
      <span className="flex h-[23px] w-[58px] items-center border border-[#7a7a7a] bg-[#f4f4f4] pr-1">
        <input defaultValue="0" disabled className="w-10 min-w-0 bg-transparent pr-1 text-right" />
        <svg viewBox="0 0 7 16" className="ml-auto h-4 w-[7px]" fill="#666" aria-hidden="true"><path d="M.5 3.500h6l-3-3zM.5 12.500h6l-3 3z" /></svg>
      </span>
    </label>
  );
}

function Workspace() {
  return (
    <main className="ml-[5px] flex min-w-0 flex-1 flex-col overflow-hidden pb-0.5 text-[12px]">
      <div className="flex h-[27px] shrink-0 pb-0.5">
        <Group className="flex-1">
          <Grip />
          {render([
            { icon: "brush", label: "删除" }, "|",
            { icon: "copy", label: "复制" }, { icon: "mirror", label: "镜像" }, "|",
            { icon: "move", label: "移动" }, { icon: "rotate", label: "旋转" }, "|",
            { icon: "extend", label: "延伸", disabled: true }, { icon: "trim", label: "修剪", disabled: true }, "|",
            { icon: "brk", label: "打断", disabled: true }, { icon: "merge", label: "合并", disabled: true }, { icon: "split", label: "分割", disabled: true }, "|",
            { icon: "align", label: "对齐", disabled: true, caret: true, tight: true },
            { icon: "offset", label: "偏移" }, { icon: "stretch", label: "拉伸" },
          ])}
          <More />
        </Group>
      </div>
      <div className="flex h-[27px] shrink-0 gap-0.5">
        <Group className="shrink-0">
          <Grip />
          <Combo value="第5层" label="楼层" width="w-[58px]" />
          <Combo value="板" label="构件类型" width="w-[70px]" />
          <Combo value="板受力筋" label="构件" width="w-[70px]" />
          <Combo value="SLJ-1" label="构件名称" width="w-[70px]" />
          <Combo value="分层板1" label="分层" width="w-[70px]" />
          <Sep />
          {render([
            { icon: "props", label: "属性", active: true },
            { icon: "editBar", label: "编辑钢筋" },
            { icon: "list", label: "构件列表" },
            { icon: "picker", label: "拾取构件" },
          ])}
        </Group>
        <Group className="flex-1">
          <Grip />
          {render([{ icon: "twoPt", label: "两点" }, { icon: "parallel", label: "平行" }])}
          <More />
        </Group>
      </div>
      <div className="flex h-[30px] shrink-0 gap-0.5">
        <Group className="flex-1">
          <Grip />
          <Item icon="cursor" label="选择" active />
          <button type="button" aria-label="选择方式" className="flex w-[11px] justify-center"><Caret /></button>
          <Sep />
          {render([{ icon: "line", label: "直线", disabled: true }, { icon: "arc", label: "三点画弧", disabled: true, caret: true }])}
          <Combo value="" label="半径" width="w-[56px]" bordered />
          {render([
            { icon: "rectG", label: "矩形", disabled: true }, "|",
            { icon: "single", label: "单板" }, { icon: "multi", label: "多板" },
            { icon: "custom", label: "自定义", caret: true, tight: true },
            { icon: "horiz", label: "水平" }, { icon: "vert", label: "垂直" }, { icon: "xy", label: "XY方向" },
          ])}
          <More />
        </Group>
        <Group className="w-[30px] shrink-0"><Grip /></Group>
      </div>
      <Drawing />
      <div className="flex h-[30px] shrink-0 gap-0.5">
        <Group className="shrink-0">
          <Grip />
          {render([{ icon: "ortho", label: "正交" }, { icon: "snap", label: "对象捕捉", active: true }, { icon: "dyn", label: "动态输入" }])}
        </Group>
        <Group className="shrink-0">
          <Grip />
          {render([
            { icon: "cross", label: "交点" }, { icon: "perp", label: "垂点", active: true }, { icon: "mid", label: "中点", active: true },
            { icon: "vertex", label: "顶点" }, { icon: "coord", label: "坐标" },
          ])}
        </Group>
        <Group className="flex-1">
          <Grip />
          <Combo value="不偏移" label="偏移方式" width="w-[58px]" />
          <Sep />
          <Spin label="X=" />
          <span className="mr-1 text-[#777]">mm</span>
          <Spin label="Y=" />
          <More />
        </Group>
      </div>
    </main>
  );
}

/* ---------- property editor ---------- */

const rows = [
  ["名称", "SLJ-1", false], ["钢筋信息", "ф8@200", true], ["类别", "面筋", true], ["左弯折(mm)", "(0)", true], ["右弯折(mm)", "(0)", true],
  ["钢筋锚固", "(35)", false], ["钢筋搭接", "(49)", false], ["归类名称", "(SLJ-1)", true], ["汇总信息", "板受力筋", true],
  ["计算设置", "按默认计算设置计算", false], ["节点设置", "按默认节点设置计算", false], ["搭接设置", "按默认搭接设置计算", false],
  ["长度调整(mm)", "", true], ["备注", "", true], ["显示样式", "", false],
];

function PropertyPanel() {
  const cell = "h-[19px] border-b border-r border-[#c0c0c0] p-0 leading-4 ";
  const head = "h-[23px] border-b border-r border-[#c0c0c0] p-0 font-normal leading-5 ";
  return (
    <aside className={"ml-0.5 flex w-[430px] shrink-0 flex-col pb-0.5 text-[12px] " + SONG}>
      <h2 className="flex h-[15px] shrink-0 items-center border border-[#808080] pr-1 text-[13px] leading-3">属性编辑器<PinClose color="#000" /></h2>
      <div className="ml-px mt-px min-h-0 flex-1 border border-[#a0a0a0] bg-white pl-px pr-0.5 pt-px">
        <table className="w-full table-fixed border-separate border-spacing-0">
          <colgroup><col className="w-[21px]" /><col className="w-[121px]" /><col /><col className="w-[31px]" /></colgroup>
          <thead>
            <tr>
              <th className={head + "bg-[#f2f2f2]"} aria-label="序号" />
              <th className={head + "bg-gradient-to-b from-white to-[#ececec]"}>属性名称</th>
              <th className={head + "bg-gradient-to-b from-[#fad8a0] to-[#f0bb5c] text-[#5c0050]"}>属性值</th>
              <th className={head + "bg-gradient-to-b from-white to-[#ececec]"}>附加</th>
            </tr>
          </thead>
          <tbody>
            {rows.map(([name, value, check], i) => (
              <tr key={name}>
                <td className={cell + "text-center " + (i === 0 ? "bg-[#fdd08c] text-[#5c0050]" : "bg-gradient-to-r from-white to-[#ececec]")}>{i + 1}</td>
                <td className={cell + (i === 0 ? "bg-[#0078d7] text-white" : i === 1 ? "text-[#0000e0]" : i === 14 ? "text-[#808080]" : "")}>
                  <span className="flex items-center">
                    <span className="flex w-5 shrink-0 pl-0.5">
                      {i === 14 && (
                        <button type="button" aria-label="展开" className="flex size-[13px] items-center justify-center border border-[#a0a0a0]">
                          <svg viewBox="0 0 7 7" className="size-[7px]" stroke="#000" aria-hidden="true"><path d="M0 3.500h7M3.500 0v7" /></svg>
                        </button>
                      )}
                    </span>
                    {name}
                  </span>
                </td>
                <td className={cell + "pl-0.5 " + (i === 0 ? "bg-[#d8eaf9]" : "")}>{value}</td>
                <td className={cell}>
                  {check && <input type="checkbox" aria-label={"附加 " + name} className="mx-auto block size-[13px] appearance-none border border-[#333] bg-white" />}
                </td>
              </tr>
            ))}
          </tbody>
        </table>
      </div>
    </aside>
  );
}

/* ---------- status + taskbar ---------- */

function StatusBar() {
  const c = "flex items-center whitespace-nowrap border border-[#d0d0d0] bg-gradient-to-b from-[#fdfdfd] to-[#efefef] pl-px ";
  return (
    <footer className={"flex h-[21px] shrink-0 gap-0.5 bg-white text-[12px] leading-4 " + SONG}>
      <div className={c + "w-[148px]"}>X=105145 Y=9344</div>
      <div className={c + "w-[78px]"}>层高:2.8m</div>
      <div className={c + "w-[98px]"}>底标高:14.75m</div>
      <div className={c + "w-[48px]"}>0</div>
      <div className={c + "flex-1"}>名称在当前层当前构件类型下不允许重名</div>
      <div className={c + "w-[70px]"}>799.6 FPS</div>
    </footer>
  );
}

function Task({ name, width = "w-10", bar, active, children }) {
  return (
    <button type="button" aria-label={name} className={"relative flex h-full shrink-0 items-center justify-center " + width + (active ? " bg-[#3a4448]" : "")}>
      {children}
      {bar && <span className={"absolute bottom-0 h-0.5 bg-[#76b9ed] " + (active ? "inset-x-0" : "inset-x-[5px]")} />}
    </button>
  );
}

const V = ({ children, className = "size-6", ...p }) => <svg viewBox="0 0 24 24" className={className} fill="none" aria-hidden="true" {...p}>{children}</svg>;
const TGrip = () => <span className="flex h-4 w-3 shrink-0 items-center justify-center gap-0.5"><i className="h-full w-px bg-[#555]" /><i className="h-full w-px bg-[#555]" /></span>;

function Taskbar() {
  return (
    <div className="flex h-10 shrink-0 items-center bg-[#000b10] text-[12px] text-white">
      <Task name="开始" width="w-12">
        <svg viewBox="0 0 16 16" className="size-4" fill="#fff" aria-hidden="true"><path d="M0 2.300L6.600 1.400v6.200H0zM7.400 1.300L16 0v7.600H7.400zM0 8.400h6.600v6.200L0 13.700zM7.400 8.400H16V16l-8.600-1.200z" /></svg>
      </Task>
      <label className="flex h-full w-[344px] shrink-0 items-center bg-[#333] px-2">
        <svg viewBox="0 0 22 22" className="size-[22px]" fill="none" stroke="#fff" strokeWidth="2.600" aria-hidden="true"><circle cx="11" cy="11" r="9" /></svg>
        <input type="text" aria-label="搜索" placeholder="在这里输入你要搜索的内容" className="ml-1.5 min-w-0 flex-1 bg-transparent text-[14px] outline-none placeholder:text-[#a0a0a0]" />
        <svg viewBox="0 0 12 18" className="mr-1.5 h-[18px] w-3" fill="none" stroke="#a8a8a8" aria-hidden="true"><rect x="3.500" y="1" width="5" height="10" /><path d="M1 8v4q0 2 2 2h6q2 0 2-2V8M6 14v3M3.500 17h5" /></svg>
      </label>
      <Task name="任务视图" width="w-12"><V className="size-[22px]" stroke="#fff" strokeWidth="1.300"><path d="M6 4.500h12v15H6zM3.500 6.500H1.500v11h2M20.500 6.500h2v11h-2" /></V></Task>
      <Task name="应用" width="w-[52px]"><V fill="#eee"><path d="M12.500 7c0 4-1 5-3 5H5c-2 0-3.500-2-3.500-5 0-4 2-5.500 5-5.500 4 0 6 2 6 5.500z" /><path d="M17 12.500c-4 0-5-1-5-3V5c0-2 2-3.500 5-3.500 4 0 5.500 2 5.500 5 0 4-2 6-5.500 6z" /><path d="M11.500 17c0-4 1-5 3-5H19c2 0 3.500 2 3.500 5 0 4-2 5.500-5 5.500-4 0-6-2-6-5.500z" /><path d="M7 11.500c4 0 5 1 5 3V19c0 2-2 3.500-5 3.500-4 0-5.500-2-5.500-5 0-4 2-6 5.500-6z" /><path d="M13.500 3c-2 3 1 6-1.500 9 3-2 6 .5 9.500-1M10.500 21c2-3-1-6 1.500-9-3 2-6-.5-9.500 1" stroke="#000b10" strokeWidth="1.200" fill="none" /></V></Task>
      <Task name="浏览器" width="w-[52px]"><V stroke="#eee" strokeWidth="3.200"><path d="M5.500 13H20c0-10-14.500-10-15 0 0 9 11.500 10 14.500 3" /><path d="M3 22C-1 17 15 0 21 2.500c1 .8.500 2.500 0 3.500" strokeWidth="1.600" /></V></Task>
      <Task name="消息" width="w-[52px]">
        <V stroke="#ccc" strokeWidth="1.300"><path d="M17 6C8 0 1 7 2 14c2 9 15 8 15 1 0-6-9-7-10-1 0 4 6 5 6 1" /><path d="M19 10c2 8-4 13-11 12" /></V>
        <span className="absolute right-2.5 top-1"><svg viewBox="0 0 14 14" className="size-3.5" fill="#e5a90c" aria-hidden="true"><path d="M1 11c2-2 2-3 2-5 0-7 8-7 8 0 0 2 0 3 2 5zM5 12h4l-2 2z" /></svg></span>
      </Task>
      <TGrip />
      <span className="w-2 shrink-0" />
      <Task name="Edge"><V fill="#0a7ad6"><path d="M2 11C3 1 21-1 22 11v3H8.500c.5 5 8 5.500 12 2.800V21C14 25 3.500 23 4 14c.2-3 2.500-5.500 5.500-7C5.500 7 3 9 2 11zm6.500-1h7.500c0-5-7-4.500-7.500 0z" /></V></Task>
      <Task name="Internet Explorer"><V stroke="#4eb4ec" strokeWidth="3.800"><path d="M6 13H20c0-9-14-10-14.500 0 0 8 11 9.500 14 3" /><path d="M3 22.500C-2 17 15-1 22 2c1 1 .5 3 0 4" stroke="#f3c32b" strokeWidth="1.800" /></V></Task>
      <Task name="资源管理器"><V><path d="M1.500 3.500h8l1.500 2h11v15h-20.500z" fill="#fbd978" /><path d="M5 12.500h14v9h-4V17H9v4.500H5z" fill="#35a8e0" /></V></Task>
      <Task name="安全浏览器" bar><V><circle cx="12" cy="12" r="10" fill="#45b63a" stroke="#eaf6e6" strokeWidth="1.500" /><path d="M7 12.500h10c0-7-9.500-7-10 0 0 6 7 7 9.500 3" stroke="#fff" strokeWidth="2.500" /><path d="M3 20C2 13 13 3 22 2.500" stroke="#b8e86c" strokeWidth="1.500" /></V></Task>
      <Task name="钢筋算量" bar active><V><rect x="0" y="0" width="24" height="24" rx="5" fill="#0a8df2" /><path d="M12 19V7c0-3 3.500-3 3.500-.5M5 12.500h14.500c0 2-1 3-3 3.500M12 19c-4 0-6-2-6.500-4.500" stroke="#fff" strokeWidth="1.800" /></V></Task>
      <Task name="笔记" bar><V><rect x="0" y="0" width="24" height="24" rx="2" fill="#f6a81c" /><path d="M3 6l13-2 3 15-13 3z" fill="#fff8e6" /><path d="M6 9l8-1M6.500 12l7-1M7 15l6-1" stroke="#a55" /><path d="M21 2L13 15l-1 3 3-2L23 4z" fill="#8c3a10" /></V></Task>
      <Task name="广联达" bar><V><path d="M23 2c-1 4-4 5-7 5-6-1-9 2-9 6 1 5 9 5 10 0 .4-2-1-3-3-3.500C20 8 22 11 21 15c-2 9-15 11-19 3C-1 10 4 1 12 1c4 0 8 2 11 1z" fill="#18a2ee" /></V></Task>
      <span className="w-2 shrink-0" />
      <TGrip />
      <span className="ml-1.5 whitespace-nowrap">链接</span>
      <div className="ml-2.5 w-[70px] whitespace-nowrap text-center leading-[17px]">32%<br />CPU使用</div>
      <div className="ml-auto flex h-full shrink-0 items-center">
        <Task name="显示隐藏图标" width="w-6"><V className="size-4" stroke="#fff" strokeWidth="2"><path d="M3 16l9-9 9 9" /></V></Task>
        <Task name="通知铃" width="w-6"><V className="size-4" fill="#fff"><path d="M1 18c3-2 3-5 3-9C4 0 20 0 20 9c0 4 0 7 3 9zM8 20h8q-4 5-8 0z" /></V></Task>
        <Task name="电源" width="w-6"><V className="size-[18px]" stroke="#fff" strokeWidth="1.500"><path d="M8 8h13v10H6v-5M21 11h2v4h-2" /><path d="M9 10h10v6H9z" fill="#fff" /><path d="M1 5h7v4H2zM3 2v3M6 2v3M4 9v4" /></V></Task>
        <Task name="网络" width="w-6"><V className="size-4" stroke="#bbb" strokeWidth="1.700"><path d="M2 20C4 10 12 4 22 3M7 21c1-7 7-12 15-13M12 22c1-5 5-8 10-9" /><circle cx="19" cy="20" r="2.500" fill="#fff" stroke="none" /></V></Task>
        <Task name="音量" width="w-6"><V className="size-4" stroke="#fff" strokeWidth="1.500"><path d="M1 9h4l5-5v16l-5-5H1zM13 9q2 3 0 6M16 7q4 5 0 10" /><path d="M19 4q6 8 0 16" stroke="#777" /></V></Task>
        <Task name="触摸键盘" width="w-[30px]"><svg viewBox="0 0 24 14" className="h-3.5 w-6" fill="none" stroke="#fff" aria-hidden="true"><path d="M.5.5h23v13H.5z" /><path d="M3 4.500h18M3 7.500h18" strokeDasharray="2 1" /><path d="M6 10.500h12" /></svg></Task>
        <button type="button" className="w-7 text-center text-[13px]">中</button>
        <Task name="输入法" width="w-7"><V className="size-4"><path d="M0 3L20 0l4 20-20 4z" fill="#f04e23" /><path d="M18 6C13 4 7 5 8 9s9 2 9 6-7 4-11 2" stroke="#fff" strokeWidth="3" /></V></Task>
        <div className="w-[78px] text-center leading-[19px]">20:58<br />2018/7/31</div>
        <Task name="操作中心" width="w-[38px]"><V className="size-[18px]" stroke="#fff" strokeWidth="1.500"><path d="M2 2h20v16h-6l-4 4-4-4H2z" /></V></Task>
        <span className="ml-2.5 mr-[3px] h-full w-px bg-[#555]" />
      </div>
    </div>
  );
}

export default function App() {
  return (
    <div className={"relative flex h-screen flex-col overflow-hidden bg-[#f0f0f0] text-[12px] text-black " + UI}>
      <TitleBar />
      <MenuBar />
      <MainToolbar />
      <div className="flex min-h-0 flex-1">
        <ModulePanel />
        <Workspace />
        <PropertyPanel />
      </div>
      <StatusBar />
      <Taskbar />
      <Overlays />
    </div>
  );
}
